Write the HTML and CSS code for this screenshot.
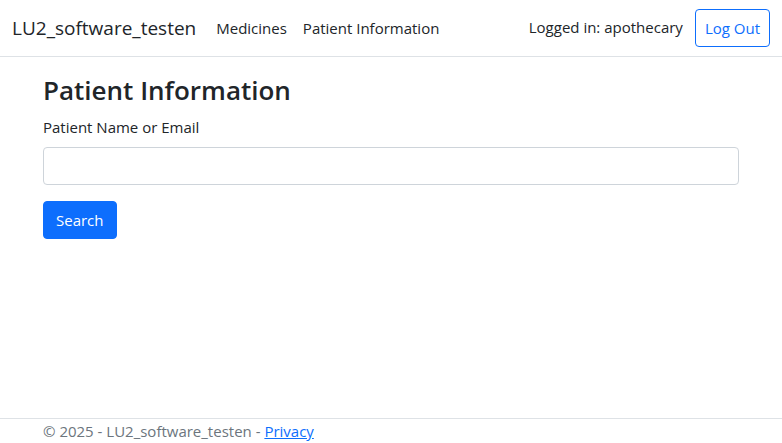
FILE: index.html
```html
<!DOCTYPE html>
<html lang="en">
<head>
<meta charset="utf-8">
<meta name="viewport" content="width=device-width, initial-scale=1">
<title>Patient Information - LU2_software_testen</title>
<link rel="stylesheet" href="styles.css">
</head>
<body>
<header class="navbar">
  <a class="brand" href="#">LU2_software_testen</a>
  <nav class="nav">
    <a class="nav-link" href="#">Medicines</a>
    <a class="nav-link" href="#">Patient Information</a>
  </nav>
  <div class="account">
    <span class="user">Logged in: apothecary</span>
    <button class="btn btn-outline" type="button">Log Out</button>
  </div>
</header>
<main class="container content">
  <h1 class="title">Patient Information</h1>
  <form class="search">
    <label class="label" for="query">Patient Name or Email</label>
    <input class="input" id="query" name="query" type="text">
    <button class="btn btn-primary" type="submit">Search</button>
  </form>
</main>
<footer class="footer">
  <div class="container">© 2025 - LU2_software_testen - <a class="link" href="#">Privacy</a></div>
</footer>
</body>
</html>
```

FILE: styles.css
```css
*, *::before, *::after { box-sizing: border-box; }
body {
  display: flex;
  flex-direction: column;
  min-height: 100vh;
  margin: 0;
  background: #fff;
  color: #212529;
  font: 15px/24px "Open Sans", "Noto Sans", sans-serif;
}
.navbar {
  display: flex;
  align-items: center;
  padding: 8px 12px;
  border-bottom: 1px solid #dee2e6;
}
.brand {
  margin-right: 12px;
  color: #212529;
  font-size: 19px;
  line-height: 32px;
  text-decoration: none;
}
.nav { display: flex; }
.nav-link {
  padding: 8px;
  color: #212529;
  text-decoration: none;
}
.account {
  display: flex;
  gap: 12px;
  margin-left: auto;
}
.user { padding-top: 6px; }
.btn {
  padding: 6px 12px;
  border: 1px solid #0d6efd;
  border-radius: 4px;
  font: inherit;
}
.btn-outline {
  padding: 6px 9px;
  background: transparent;
  color: #0d6efd;
}
.btn-primary {
  background: #0d6efd;
  color: #fff;
}
.container {
  width: 100%;
  max-width: 720px;
  margin: 0 auto;
  padding: 0 12px;
}
.content { padding-top: 16px; }
.title {
  margin: 0 0 8px;
  font-size: 26px;
  font-weight: 600;
  line-height: 34px;
}
.label {
  display: block;
  margin-bottom: 8px;
}
.input {
  display: block;
  width: 100%;
  margin-bottom: 16px;
  padding: 6px 12px;
  border: 1px solid #ced4da;
  border-radius: 4px;
  font: inherit;
}
.footer {
  margin-top: auto;
  border-top: 1px solid #dee2e6;
  color: #6c757d;
}
.link { color: #0d6efd; }
```
